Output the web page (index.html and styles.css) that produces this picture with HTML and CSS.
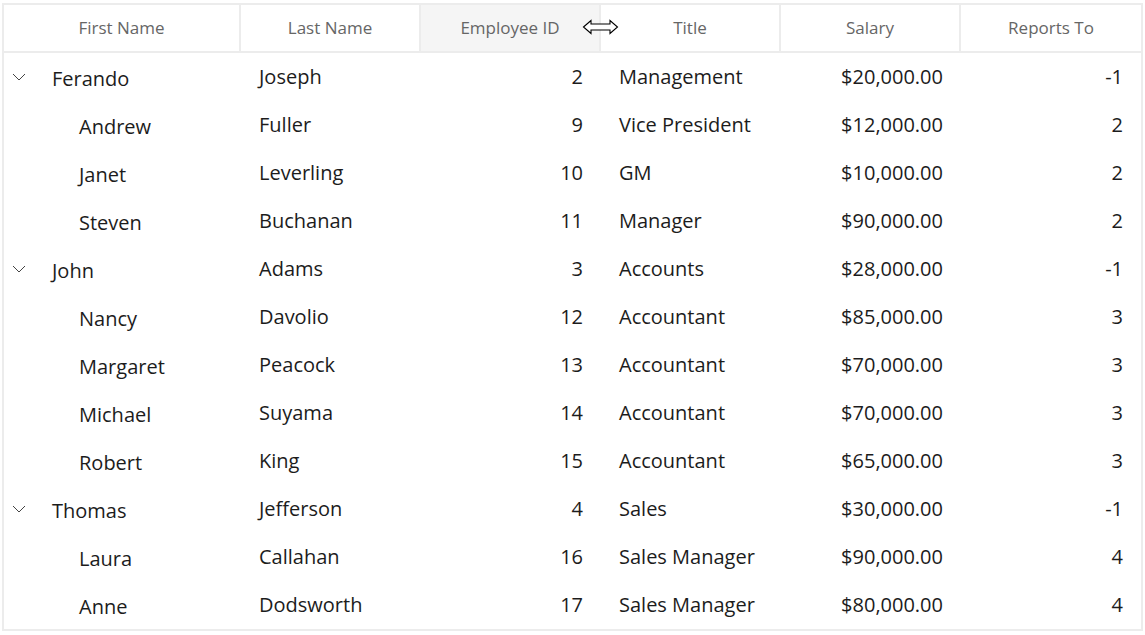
FILE: index.html
```html
<!DOCTYPE html>
<html lang="en">
<head>
<meta charset="utf-8">
<title>Employees</title>
<link rel="stylesheet" href="styles.css">
</head>
<body>
<div class="grid">
  <div class="head">
    <div class="hcell">First Name</div>
    <div class="hcell">Last Name</div>
    <div class="hcell hover">Employee ID</div>
    <div class="hcell">Title</div>
    <div class="hcell">Salary</div>
    <div class="hcell last">Reports To</div>
    <svg class="resize" width="37" height="16" viewBox="0 0 37 16">
      <path d="M1.5 8 L9 1.5 V5 H28 V1.5 L35.5 8 L28 14.5 V11 H9 V14.5 Z" fill="#fff" stroke="#000" stroke-width="1.1" stroke-linejoin="miter"/>
    </svg>
  </div>
  <div class="body">
    <div class="row"><div class="c first"><span class="chev"><svg width="14" height="8" viewBox="0 0 14 8"><path d="M1 1 L7 7 L13 1" fill="none" stroke="#444" stroke-width="1"/></svg></span>Ferando</div><div class="c">Joseph</div><div class="c num">2</div><div class="c">Management</div><div class="c num">$20,000.00</div><div class="c num end">-1</div></div>
    <div class="row"><div class="c first child">Andrew</div><div class="c">Fuller</div><div class="c num">9</div><div class="c">Vice President</div><div class="c num">$12,000.00</div><div class="c num end">2</div></div>
    <div class="row"><div class="c first child">Janet</div><div class="c">Leverling</div><div class="c num">10</div><div class="c">GM</div><div class="c num">$10,000.00</div><div class="c num end">2</div></div>
    <div class="row"><div class="c first child">Steven</div><div class="c">Buchanan</div><div class="c num">11</div><div class="c">Manager</div><div class="c num">$90,000.00</div><div class="c num end">2</div></div>
    <div class="row"><div class="c first"><span class="chev"><svg width="14" height="8" viewBox="0 0 14 8"><path d="M1 1 L7 7 L13 1" fill="none" stroke="#444" stroke-width="1"/></svg></span>John</div><div class="c">Adams</div><div class="c num">3</div><div class="c">Accounts</div><div class="c num">$28,000.00</div><div class="c num end">-1</div></div>
    <div class="row"><div class="c first child">Nancy</div><div class="c">Davolio</div><div class="c num">12</div><div class="c">Accountant</div><div class="c num">$85,000.00</div><div class="c num end">3</div></div>
    <div class="row"><div class="c first child">Margaret</div><div class="c">Peacock</div><div class="c num">13</div><div class="c">Accountant</div><div class="c num">$70,000.00</div><div class="c num end">3</div></div>
    <div class="row"><div class="c first child">Michael</div><div class="c">Suyama</div><div class="c num">14</div><div class="c">Accountant</div><div class="c num">$70,000.00</div><div class="c num end">3</div></div>
    <div class="row"><div class="c first child">Robert</div><div class="c">King</div><div class="c num">15</div><div class="c">Accountant</div><div class="c num">$65,000.00</div><div class="c num end">3</div></div>
    <div class="row"><div class="c first"><span class="chev"><svg width="14" height="8" viewBox="0 0 14 8"><path d="M1 1 L7 7 L13 1" fill="none" stroke="#444" stroke-width="1"/></svg></span>Thomas</div><div class="c">Jefferson</div><div class="c num">4</div><div class="c">Sales</div><div class="c num">$30,000.00</div><div class="c num end">-1</div></div>
    <div class="row"><div class="c first child">Laura</div><div class="c">Callahan</div><div class="c num">16</div><div class="c">Sales Manager</div><div class="c num">$90,000.00</div><div class="c num end">4</div></div>
    <div class="row"><div class="c first child">Anne</div><div class="c">Dodsworth</div><div class="c num">17</div><div class="c">Sales Manager</div><div class="c num">$80,000.00</div><div class="c num end">4</div></div>
  </div>
</div>
</body>
</html>
```

FILE: styles.css
```css
html, body {
  margin: 0;
  padding: 0;
  background: #fff;
}

body {
  font-family: "Open Sans", "Noto Sans", "Liberation Sans", sans-serif;
  color: #1c1c1c;
}

.grid {
  margin: 3px 0 0 2px;
  width: 1137px;
  border: 2px solid #ececec;
}

.head {
  position: relative;
  display: grid;
  grid-template-columns: 237px 180px 180px 180px 180px 180px;
  height: 46px;
  border-bottom: 2px solid #ececec;
}

.hcell {
  display: flex;
  align-items: center;
  justify-content: center;
  font-size: 17px;
  color: #666;
  border-right: 2px solid #ececec;
  padding-bottom: 2px;
}

.hcell.last {
  border-right: none;
}

.hcell.hover {
  background: #f5f5f5;
}

.resize {
  position: absolute;
  left: 578px;
  top: 14px;
}

.row {
  display: grid;
  grid-template-columns: 237px 180px 180px 180px 180px 180px;
  height: 48px;
}

.c {
  display: flex;
  align-items: center;
  font-size: 20px;
  padding: 0 18px 2px 18px;
  white-space: nowrap;
}

.c.num {
  justify-content: flex-end;
  padding: 0 18px 2px 0;
}

.c.first {
  padding: 3px 0 0 8px;
}

.c.first.child {
  padding-left: 75px;
}

.chev {
  display: inline-flex;
  width: 40px;
  align-items: center;
  margin-top: -4px;
}
```
